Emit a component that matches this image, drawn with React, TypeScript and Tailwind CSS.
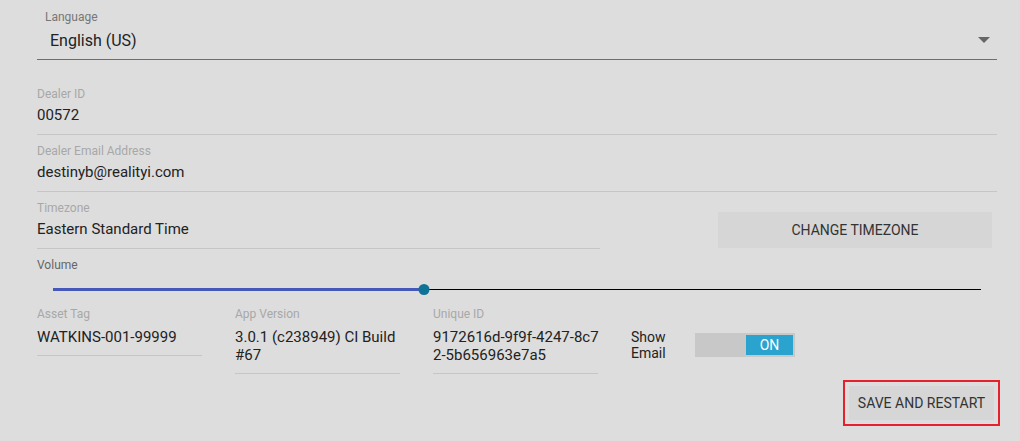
import React from 'react'

function Field({ label, value, className = '' }: { label: string; value: React.ReactNode; className?: string }) {
  return (
    <div className={`pt-[9px] pb-[9px] border-b border-[#c6c6c6] ${className}`}>
      <div className="text-[12px] leading-[14px] text-[#a8a8a8]">{label}</div>
      <div className="mt-[4px] text-[15px] leading-[20px] text-[#222]">{value}</div>
    </div>
  )
}

function SmallField({ label, lines, className = '' }: { label: string; lines: string[]; className?: string }) {
  return (
    <div className={`w-[165px] pb-[9px] border-b border-[#c6c6c6] ${className}`}>
      <div className="text-[12px] leading-[14px] text-[#a8a8a8]">{label}</div>
      <div className="mt-[7px] text-[15px] leading-[18px] text-[#222] whitespace-nowrap">
        {lines.map(l => <div key={l}>{l}</div>)}
      </div>
    </div>
  )
}

export default function App() {
  const volume = 0.4
  return (
    <div className="w-[1020px] h-[441px] bg-[#dddddd] overflow-hidden pl-[37px] pr-[20px]" style={{ fontFamily: 'Roboto, "Liberation Sans", sans-serif' }}>
      {/* Language select */}
      <div className="mr-[3px] pt-[10px] pb-[7px] border-b border-[#6e6e6e] relative">
        <div className="ml-[8px] text-[12px] leading-[14px] text-[#777]">Language</div>
        <div className="ml-[13px] mt-[6px] text-[16px] leading-[22px] text-[#222]">English (US)</div>
        <div className="absolute right-[7px] top-[37px] w-0 h-0 border-l-[6px] border-r-[6px] border-t-[6px] border-l-transparent border-r-transparent border-t-[#666]" />
      </div>

      <Field label="Dealer ID" value="00572" className="mr-[3px] pt-[27px]" />
      <Field label="Dealer Email Address" value="destinyb@realityi.com" className="mr-[3px]" />

      {/* Timezone row */}
      <div className="flex items-start">
        <Field label="Timezone" value="Eastern Standard Time" className="w-[563px]" />
        <button className="ml-auto mr-[8px] mt-[20px] w-[274px] h-[36px] bg-[#d5d6d5] text-[14px] text-[#333]">
          CHANGE TIMEZONE
        </button>
      </div>

      {/* Volume */}
      <div className="pt-[9px]">
        <div className="text-[12px] leading-[14px] text-[#666]">Volume</div>
        <div className="mt-[11px] ml-[16px] mr-[19px] h-[12px] relative flex items-center">
          <div className="h-[3px] bg-[#4557b9]" style={{ width: `${volume * 100}%` }} />
          <div className="flex-1 h-px bg-black" />
          <div className="absolute w-[11px] h-[11px] rounded-full bg-[#0f7396] -translate-x-1/2" style={{ left: `${volume * 100}%` }} />
        </div>
      </div>

      {/* Info row */}
      <div className="mt-[12px] flex items-start gap-[33px]">
        <SmallField label="Asset Tag" lines={['WATKINS-001-99999']} />
        <SmallField label="App Version" lines={['3.0.1 (c238949) CI Build', '#67']} />
        <SmallField label="Unique ID" lines={['9172616d-9f9f-4247-8c7', '2-5b656963e7a5']} />
        <div className="mt-[22px] flex items-center">
          <div className="text-[14px] leading-[16px] text-[#222] w-[64px]">
            <div>Show</div>
            <div>Email</div>
          </div>
          <div className="w-[100px] h-[24px] bg-[#c8c8c8] flex justify-end items-center pr-[2px]">
            <div className="w-[47px] h-[20px] bg-[#2aa3cf] text-white text-[14px] flex items-center justify-center">ON</div>
          </div>
        </div>
      </div>

      {/* Save */}
      <div className="mt-[6px] flex justify-end">
        <div className="border-2 border-[#e5212c] p-[4px] w-[157px] h-[46px]">
          <button className="w-full h-full bg-[#d5d6d5] text-[14px] text-[#333]">SAVE AND RESTART</button>
        </div>
      </div>
    </div>
  )
}
